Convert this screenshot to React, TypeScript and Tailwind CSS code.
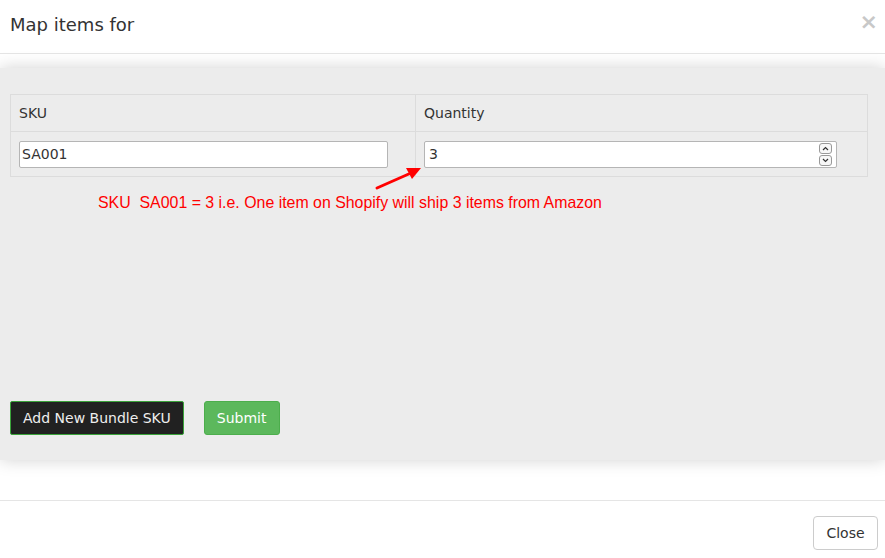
import React from 'react';

export default function App() {
  return (
    <div className="w-[885px] h-[558px] bg-white flex flex-col overflow-hidden text-[#333] font-['DejaVu_Sans',sans-serif]">
      {/* Header */}
      <div className="h-[54px] border-b border-[#e5e5e5] flex items-start justify-between pl-[10px] pr-[7px]">
        <h4 className="text-[18px] leading-[20px] mt-[15px]">Map items for</h4>
        <button className="text-[#c8c8c8] text-[22px] leading-none mt-[11px] font-bold">×</button>
      </div>

      {/* Body panel */}
      <div className="mt-[14px] h-[392px] bg-[#ececec] shadow-[0_0_16px_rgba(0,0,0,0.18)] flex flex-col pl-[10px] pr-[17px] pt-[26px]">
        <table className="w-full border-collapse border border-[#dcdcdc] text-[14px]">
          <thead>
            <tr className="h-[37px]">
              <th className="w-[405px] border border-[#dcdcdc] text-left font-normal px-[8px]">SKU</th>
              <th className="border border-[#dcdcdc] text-left font-normal px-[8px]">Quantity</th>
            </tr>
          </thead>
          <tbody>
            <tr className="h-[45px]">
              <td className="border border-[#dcdcdc] px-[8px]">
                <input
                  defaultValue="SA001"
                  className="w-[369px] h-[27px] bg-white border border-[#b5b5b5] rounded-[2px] px-[2px] text-[14px] outline-none"
                />
              </td>
              <td className="border border-[#dcdcdc] px-[8px]">
                <div className="relative w-[413px] h-[27px] bg-white border border-[#b5b5b5] rounded-[2px] flex items-center px-[4px]">
                  <span>3</span>
                  <div className="absolute right-[4px] top-[1px] flex flex-col gap-[1px]">
                    <span className="w-[13px] h-[11px] border border-[#999] rounded-[3px] bg-[#f7f7f7] flex items-center justify-center">
                      <svg width="7" height="5" viewBox="0 0 7 5"><path d="M1 4 L3.5 1.5 L6 4" fill="none" stroke="#333" strokeWidth="1.2" /></svg>
                    </span>
                    <span className="w-[13px] h-[11px] border border-[#999] rounded-[3px] bg-[#f7f7f7] flex items-center justify-center">
                      <svg width="7" height="5" viewBox="0 0 7 5"><path d="M1 1 L3.5 3.5 L6 1" fill="none" stroke="#333" strokeWidth="1.2" /></svg>
                    </span>
                  </div>
                </div>
              </td>
            </tr>
          </tbody>
        </table>

        <div className="relative h-[50px]">
          <svg className="absolute left-[355px] top-[-14px]" width="64" height="30" viewBox="0 0 64 30">
            <path d="M12 25 L46 10" stroke="#ff0000" strokeWidth="3" strokeLinecap="round" />
            <path d="M56 5 L41 5 L47 16 Z" fill="#ff0000" />
          </svg>
          <p className="absolute left-[88px] top-[14px] text-[15.9px] text-[#ff0000] font-['Liberation_Sans',Arial,sans-serif] whitespace-nowrap">
            SKU&nbsp; SA001 = 3 i.e. One item on Shopify will ship 3 items from Amazon
          </p>
        </div>

        <div className="mt-[174px] flex gap-[20px]">
          <button className="h-[34px] px-[12px] bg-[#212121] border border-[#3aa33a] rounded-[2px] text-[#eee] text-[14px]">
            Add New Bundle SKU
          </button>
          <button className="h-[34px] px-[12px] w-[76px] bg-[#5cb85c] border border-[#4cae4c] rounded-[3px] text-white text-[14px]">
            Submit
          </button>
        </div>
      </div>

      {/* Footer */}
      <div className="mt-[40px] border-t border-[#e5e5e5] flex justify-end pr-[7px] pt-[15px]">
        <button className="h-[34px] w-[65px] bg-white border border-[#ccc] rounded-[4px] text-[14px] text-[#333]">
          Close
        </button>
      </div>
    </div>
  );
}
